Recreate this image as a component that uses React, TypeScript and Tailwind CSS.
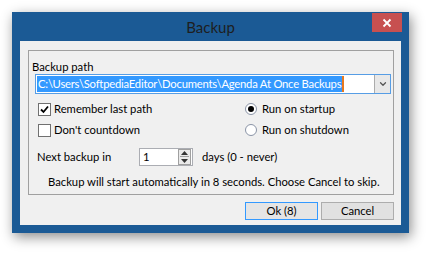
import { ChevronDown } from 'lucide-react'

function CheckBox({ checked, label }: { checked?: boolean; label: string }) {
  return (
    <div className="flex items-center gap-[3px] h-4">
      <div className="w-[13px] h-[13px] bg-white border border-[#707070] flex items-center justify-center">
        {checked && (
          <svg width="9" height="9" viewBox="0 0 9 9">
            <path d="M1 4.5 L3.5 7 L8 1.5" stroke="#000" strokeWidth="1.8" fill="none" />
          </svg>
        )}
      </div>
      <span>{label}</span>
    </div>
  )
}

function Radio({ checked, label }: { checked?: boolean; label: string }) {
  return (
    <div className="flex items-center gap-[5px] h-4">
      <div className="w-[12px] h-[12px] rounded-full bg-white border border-[#8a94a6] flex items-center justify-center">
        {checked && <div className="w-[6px] h-[6px] rounded-full bg-black" />}
      </div>
      <span>{label}</span>
    </div>
  )
}

export default function App() {
  return (
    <div
      className="w-[429px] h-[254px] bg-white pt-3 pl-3 text-[11.25px] text-black leading-4"
      style={{ fontFamily: 'Lato, "Open Sans", sans-serif' }}
    >
      <div className="relative w-[397px] h-[221px] bg-[#1b5a95] flex flex-col shadow-[2px_4px_12px_rgba(0,0,0,0.45)]">
        {/* title bar */}
        <div className="h-[29px] flex items-center justify-center text-[15px] text-[#1e1e1e]">Backup</div>
        <div className="absolute right-[7px] top-[1px] w-[30px] h-[19px] bg-[#c75050] flex items-center justify-center">
          <svg width="10" height="10" viewBox="0 0 10 10">
            <path d="M1.5 1.5 L8.5 8.5 M8.5 1.5 L1.5 8.5" stroke="#fff" strokeWidth="1.8" />
          </svg>
        </div>

        {/* client area */}
        <div className="mx-2 h-[184px] bg-[#f0f0f0] flex flex-col pt-[9px] pl-2 pr-[7px]">
          <div className="h-[145px] border border-[#a0a0a0] flex flex-col">
            <div className="mt-[8px] pl-[3px] h-[15px] leading-[15px]">Backup path</div>

            <div className="ml-[6px] mr-[2px] h-[20px] bg-white border border-[#569de5] flex items-center">
              <div className="flex-1 min-w-0 overflow-hidden flex items-center pl-[1px]">
                <span className="bg-[#3399ff] text-white px-[1px] leading-[16px] whitespace-nowrap tracking-[-0.22px]">
                  C:\Users\SoftpediaEditor\Documents\Agenda At Once Backups
                </span>
                <div className="w-[2px] h-[16px] bg-[#e8781e] shrink-0" />
              </div>
              <div className="w-[16px] h-[18px] shrink-0 bg-[#e8e8e8] border-l border-[#acacac] flex items-center justify-center">
                <ChevronDown className="w-[10px] h-[10px] text-[#555]" strokeWidth={3} />
              </div>
            </div>

            <div className="mt-[7px] pl-[9px] grid grid-cols-[207px_1fr] gap-y-[5px]">
              <CheckBox checked label="Remember last path" />
              <Radio checked label="Run on startup" />
              <CheckBox label="Don't countdown" />
              <Radio label="Run on shutdown" />
            </div>

            <div className="mt-[10px] pl-[8px] flex items-center h-[18px]">
              <span className="w-[102px]">Next backup in</span>
              <div className="w-[54px] h-[18px] bg-white border border-[#abadb3] flex items-center">
                <span className="flex-1 pl-[3px]">1</span>
                <div className="w-[13px] h-[16px] border border-[#a0a0a0] bg-[#eaeaea] flex flex-col items-center justify-around mr-[1px]">
                  <svg width="7" height="4" viewBox="0 0 7 4">
                    <path d="M0 4 L3.5 0 L7 4 Z" fill="#333" />
                  </svg>
                  <div className="w-[9px] h-px bg-[#a0a0a0]" />
                  <svg width="7" height="4" viewBox="0 0 7 4">
                    <path d="M0 0 L3.5 4 L7 0 Z" fill="#333" />
                  </svg>
                </div>
              </div>
              <span className="ml-[9px]">days (0 - never)</span>
            </div>

            <div className="mt-[8px] pl-[19px] whitespace-nowrap">
              Backup will start automatically in 8 seconds. Choose Cancel to skip.
            </div>
          </div>

          <div className="mt-[7px] flex justify-end gap-[3px]">
            <button className="w-[73px] h-[18px] bg-[#e5e5e5] border border-[#3399ff] leading-4">Ok (8)</button>
            <button className="w-[73px] h-[18px] bg-[#e1e1e1] border border-[#adadad] leading-4">Cancel</button>
          </div>
        </div>
      </div>
    </div>
  )
}
